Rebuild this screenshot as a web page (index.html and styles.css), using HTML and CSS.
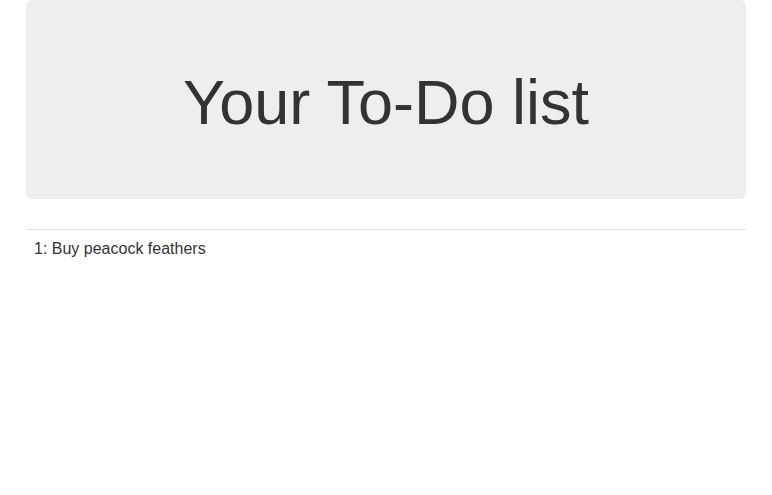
FILE: index.html
```html
<!DOCTYPE html>
<html>
<head>
<meta charset="utf-8">
<title>To-Do lists</title>
<link rel="stylesheet" href="styles.css">
</head>
<body>
<div class="container">
  <div class="jumbotron">
    <h1 class="title">Your To-Do list</h1>
  </div>
  <table class="table">
    <tbody>
      <tr><td>1: Buy peacock feathers</td></tr>
    </tbody>
  </table>
</div>
</body>
</html>
```
FILE: styles.css
```css
html, body {
  margin: 0;
  padding: 0;
}
body {
  font-family: "Liberation Sans", Arial, Helvetica, sans-serif;
  font-size: 14px;
  line-height: 1.42857143;
  color: #333;
  background: #fff;
}
.container {
  width: 750px;
  box-sizing: border-box;
  padding: 0 15px;
  margin: 0 auto;
}
.jumbotron {
  background: #eee;
  border-radius: 6px;
  padding: 48px 60px;
  margin-bottom: 30px;
  text-align: center;
}
.title {
  font-size: 63px;
  font-weight: 500;
  line-height: 1.1;
  margin: 20px 0 14px;
  color: #333;
}
.table {
  width: 100%;
  border-collapse: collapse;
  border-spacing: 0;
  font-size: 16px;
}
.table td {
  padding: 8px;
  line-height: 1.42857143;
  border-top: 1px solid #ddd;
  vertical-align: top;
  text-align: left;
}
```
